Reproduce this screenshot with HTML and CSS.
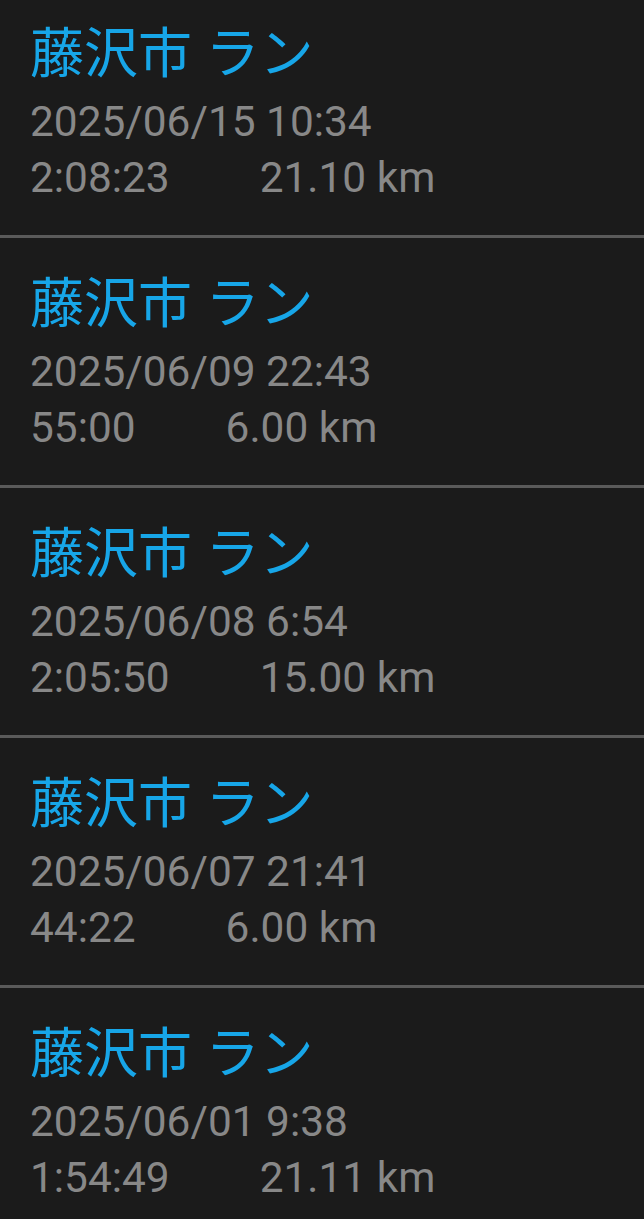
FILE: index.html
```html
<!DOCTYPE html>
<html lang="ja">
<head>
<meta charset="utf-8">
<link rel="stylesheet" href="styles.css">
<title>ラン一覧</title>
</head>
<body>
<ul class="list">
  <li class="item">
    <div class="title">藤沢市 ラン</div>
    <div class="date">2025/06/15 10:34</div>
    <div class="stats"><span>2:08:23</span><span>21.10 km</span></div>
  </li>
  <li class="item">
    <div class="title">藤沢市 ラン</div>
    <div class="date">2025/06/09 22:43</div>
    <div class="stats"><span>55:00</span><span>6.00 km</span></div>
  </li>
  <li class="item">
    <div class="title">藤沢市 ラン</div>
    <div class="date">2025/06/08 6:54</div>
    <div class="stats"><span>2:05:50</span><span>15.00 km</span></div>
  </li>
  <li class="item">
    <div class="title">藤沢市 ラン</div>
    <div class="date">2025/06/07 21:41</div>
    <div class="stats"><span>44:22</span><span>6.00 km</span></div>
  </li>
  <li class="item">
    <div class="title">藤沢市 ラン</div>
    <div class="date">2025/06/01 9:38</div>
    <div class="stats"><span>1:54:49</span><span>21.11 km</span></div>
  </li>
</ul>
</body>
</html>
```

FILE: styles.css
```css
html, body {
  margin: 0;
  padding: 0;
  background: #1b1b1b;
  height: 100%;
  overflow: hidden;
}
.list {
  list-style: none;
  margin: -12px 0 0;
  padding: 0;
}
.item {
  padding: 39px 30px 0;
  height: 208px;
  border-bottom: 3px solid #5a5a5a;
}
.title {
  font-family: "Roboto", "Noto Sans CJK JP", sans-serif;
  font-size: 54px;
  line-height: 55px;
  color: #17a6e8;
  margin-bottom: 12px;
}
.date, .stats {
  font-family: "Roboto", sans-serif;
  font-size: 42.4px;
  line-height: 56px;
  color: #888888;
}
.stats {
  display: flex;
  gap: 90px;
}
```
